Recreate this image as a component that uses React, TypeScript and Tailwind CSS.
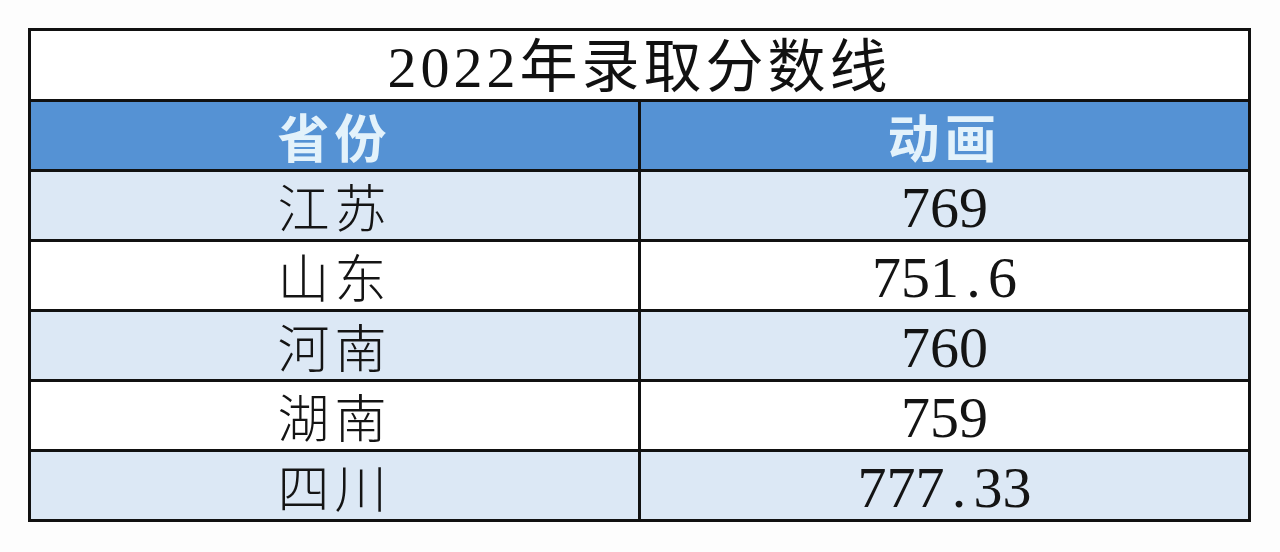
import React from "react";

const rows = [
  { province: "江苏", score: "769", shade: true },
  { province: "山东", score: "751.6", shade: false },
  { province: "河南", score: "760", shade: true },
  { province: "湖南", score: "759", shade: false },
  { province: "四川", score: "777.33", shade: true },
];

// every character on a half-em grid, like the full-width table font in the picture
function Score({ value }: { value: string }) {
  return (
    <span className="inline-flex">
      {value.split("").map((ch, i) => (
        <span key={i} className="inline-block w-[0.5em] text-center">
          {ch}
        </span>
      ))}
    </span>
  );
}

export default function App() {
  return (
    <div className="min-h-[552px] w-[1280px] bg-[#fdfdfd] pt-[28px] pl-[28px]">
      <div className="w-[1223px] border-[3px] border-[#111]">
        {/* Title */}
        <div className="flex h-[68px] items-center justify-center bg-white pt-[6px] font-['Liberation_Serif','Noto_Sans_CJK_SC',serif] text-[58px] leading-none tracking-[4px] text-[#111]">
          2022年录取分数线
        </div>

        {/* Header */}
        <div className="grid h-[70px] grid-cols-[607px_610px] border-t-[3px] border-[#111] bg-[#5592d4] font-['Noto_Sans_CJK_SC',sans-serif] text-[52px] font-bold leading-none tracking-[5px] text-[#e3f2fb]">
          <div className="flex items-center justify-center">省份</div>
          <div className="flex items-center justify-center border-l-[3px] border-[#111]">动画</div>
        </div>

        {/* Body */}
        {rows.map((r) => (
          <div
            key={r.province}
            className={
              "grid h-[70px] grid-cols-[607px_610px] border-t-[3px] border-[#111] text-[#141414] " +
              (r.shade ? "bg-[#dce8f5]" : "bg-white")
            }
          >
            <div className="flex items-center justify-center font-['Noto_Sans_CJK_SC',sans-serif] text-[52px] font-light leading-none tracking-[5px]">
              {r.province}
            </div>
            <div className="flex items-center justify-center border-l-[3px] border-[#111] pt-[4px] font-['Liberation_Serif',serif] text-[58px] leading-none">
              <Score value={r.score} />
            </div>
          </div>
        ))}
      </div>
    </div>
  );
}
